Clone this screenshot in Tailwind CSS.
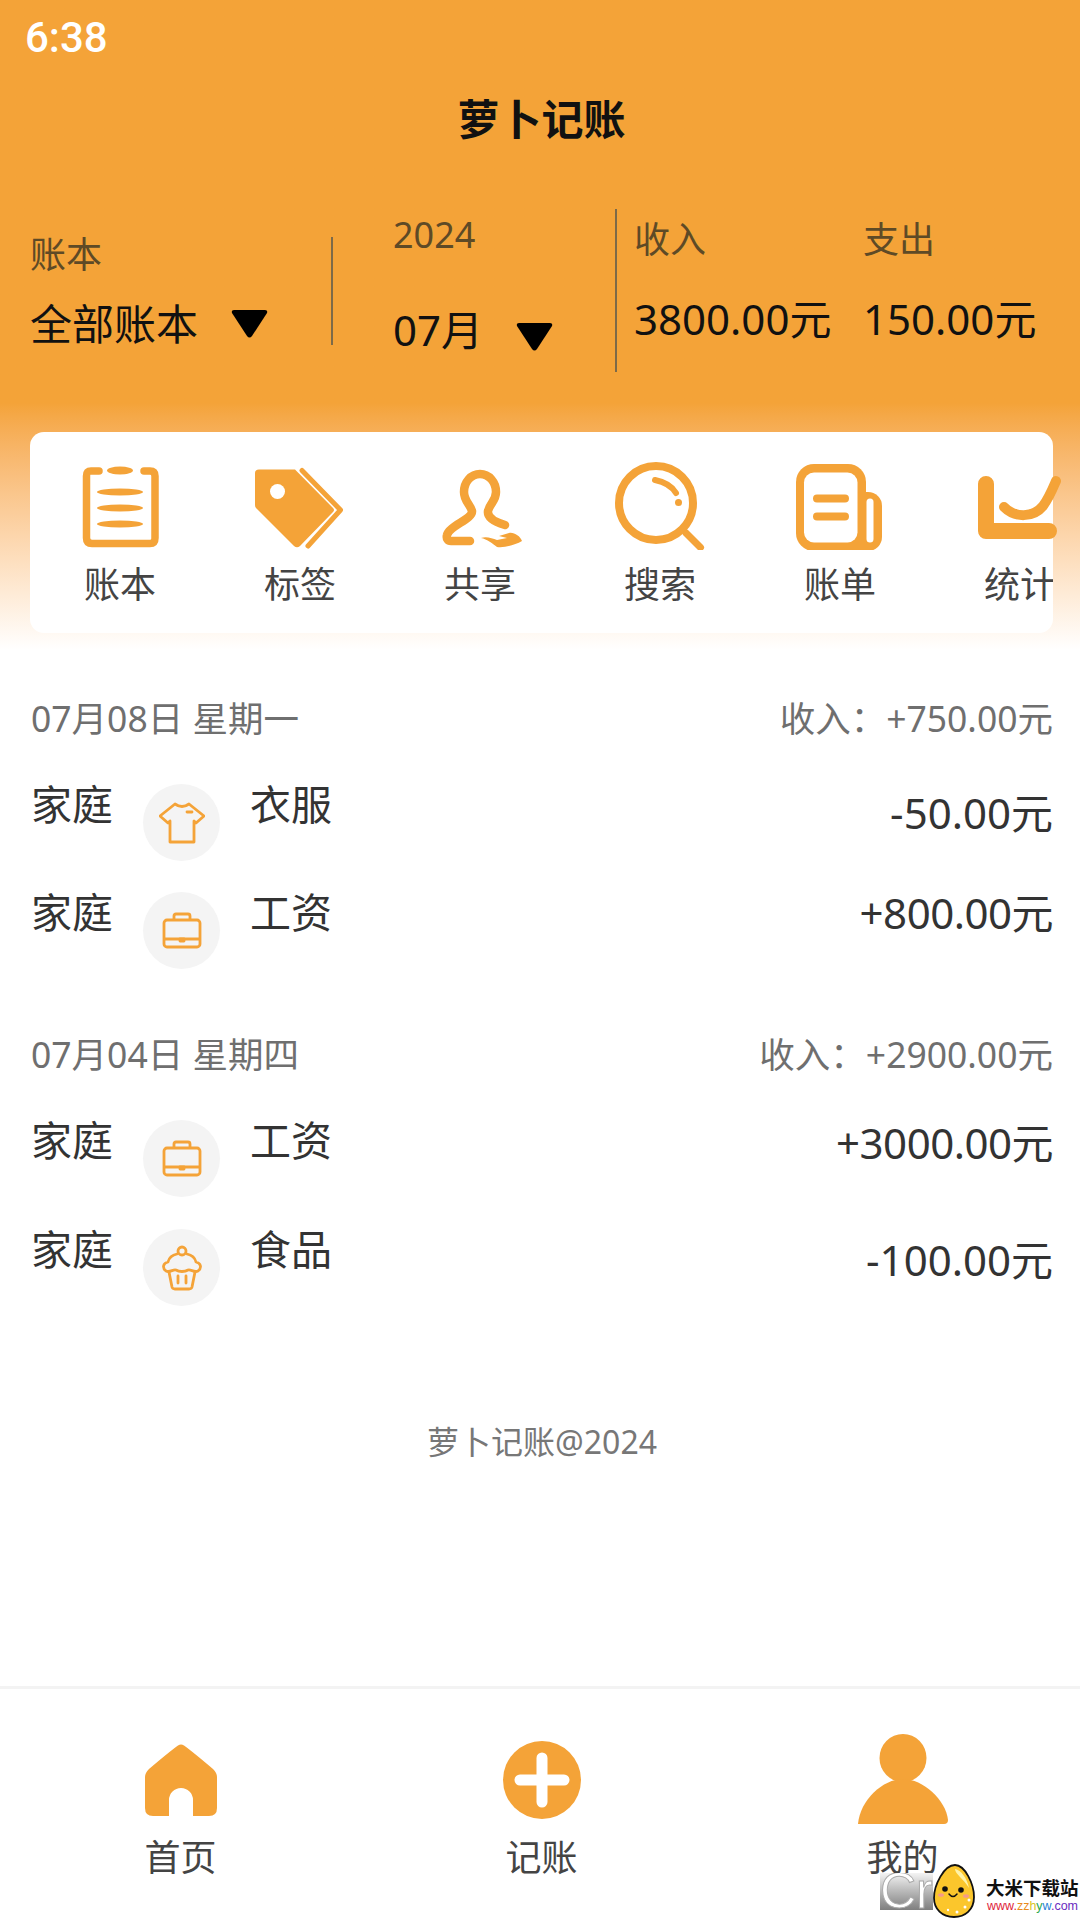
<!DOCTYPE html>
<html lang="zh-CN">
<head>
    <meta charset="UTF-8">
    <meta name="viewport" content="width=device-width, initial-scale=1.0">
    <title>萝卜记账</title>
    <script src="https://cdn.jsdelivr.net/npm/@tailwindcss/browser@4"></script>
</head>
<body class="bg-white">
<div class="relative w-[1080px] h-[1920px] overflow-hidden flex flex-col bg-white font-['Noto_Sans','Noto_Sans_CJK_SC',sans-serif]">

    <!-- orange header, fades out behind the shortcut card -->
    <header class="h-[650px] shrink-0 bg-linear-to-b from-[#f4a338] from-[62%] to-white">
        <div class="h-[75px] pl-[25px] flex items-center text-[42px] font-medium text-white font-['Roboto',sans-serif]">6:38</div>
        <h1 class="h-[87px] pl-[3px] flex items-center justify-center text-[42px] font-bold text-[#111]">萝卜记账</h1>

        <div class="mt-[47px] h-[163px] flex">
            <div class="w-[331px] pl-[30px] pt-[24px]">
                <div class="text-[36px] leading-[44px] text-[#5e4a26]">账本</div>
                <div class="mt-[22px] flex items-center text-[42px] leading-[50px] text-[#111]">
                    全部账本
                    <svg class="ml-[33px]" width="37" height="28" viewBox="0 0 37 28"><path d="M3 0H34Q37 0 36 3L21 26Q18.500 29 16 26L1 3Q0 0 3 0Z" fill="#000"/></svg>
                </div>
            </div>
            <div class="mt-[28px] h-[108px] w-[2px] bg-[#7d6a48]"></div>
            <div class="w-[282px] pl-[60px] pt-[4px]">
                <div class="text-[36px] leading-[44px] text-[#5e4a26]">2024</div>
                <div class="mt-[48px] flex items-center text-[42px] leading-[50px] text-[#111]">
                    07月
                    <svg class="ml-[33px] mt-[13px]" width="37" height="28" viewBox="0 0 37 28"><path d="M3 0H34Q37 0 36 3L21 26Q18.500 29 16 26L1 3Q0 0 3 0Z" fill="#000"/></svg>
                </div>
            </div>
            <div class="h-[163px] w-[2px] bg-[#7d6a48]"></div>
            <div class="pl-[17px] pt-[9px] grid grid-cols-[229px_200px]">
                <div class="text-[36px] leading-[44px] text-[#5e4a26]">收入</div>
                <div class="text-[36px] leading-[44px] text-[#5e4a26]">支出</div>
                <div class="mt-[4px] text-[42px] leading-[50px] text-[#111]">3800.00元</div>
                <div class="mt-[4px] text-[42px] leading-[50px] text-[#111]">150.00元</div>
            </div>
        </div>

        <!-- shortcuts -->
        <nav class="mt-[60px] ml-[30px] w-[1023px] h-[201px] rounded-[14px] bg-white flex pt-[28px]">
            <div class="w-[180px] shrink-0 flex flex-col items-center">
                <svg width="90" height="90" viewBox="0 0 90 90" fill="none">
                    <path d="M24 11H16Q11.500 11 11.500 16V78Q11.500 83.500 17 83.500H75Q80 83.500 80 78V16Q80 11 75 11H69" stroke="#f4a338" stroke-width="7.500" stroke-linecap="round"/>
                    <ellipse cx="45" cy="10.500" rx="13" ry="4" fill="#f4a338"/>
                    <ellipse cx="45" cy="32" rx="23" ry="3.500" fill="#f4a338"/>
                    <ellipse cx="45" cy="48" rx="23" ry="3.500" fill="#f4a338"/>
                    <ellipse cx="45" cy="64" rx="23" ry="3.500" fill="#f4a338"/>
                </svg>
                <span class="mt-[13px] text-[36px] leading-[44px] text-[#444]">账本</span>
            </div>
            <div class="w-[180px] shrink-0 flex flex-col items-center">
                <svg width="90" height="90" viewBox="0 0 90 90" fill="none">
                    <path d="M4 9.500H40L78 48Q80 50 78 52L45 86Q42 88.500 39 86L1 48Q0 47 0 45V13Q0 9.500 4 9.500Z" fill="#f4a338"/>
                    <circle cx="22.500" cy="31.500" r="7.500" fill="#fff"/>
                    <path d="M47 10.500L85.500 50L53 86" stroke="#f4a338" stroke-width="5" stroke-linecap="round" stroke-linejoin="round"/>
                </svg>
                <span class="mt-[13px] text-[36px] leading-[44px] text-[#444]">标签</span>
            </div>
            <div class="w-[180px] shrink-0 flex flex-col items-center">
                <svg width="90" height="90" viewBox="0 0 90 90" fill="none">
                    <path d="M70 65C60 62 52 58 53 51C55 43 61 41 61 32C61 22 54 14 45 14C36 14 29 22 29 32C29 41 35 44 37 51C38 59 14 66 12 75C11 79 13 81 16 81H35" stroke="#f4a338" stroke-width="8.500" stroke-linecap="round"/>
                    <path d="M46 78C52 79 58 84 62 87C70 88 80 85 87 81C85 76 79 72 74 73L64 76L72 78L62 80C57 78 51 76 46 78Z" fill="#f4a338"/>
                </svg>
                <span class="mt-[13px] text-[36px] leading-[44px] text-[#444]">共享</span>
            </div>
            <div class="w-[180px] shrink-0 flex flex-col items-center">
                <svg width="90" height="90" viewBox="0 0 90 90" fill="none" stroke="#f4a338" stroke-linecap="round">
                    <circle cx="41" cy="43" r="37" stroke-width="8"/>
                    <path d="M71 73L85.500 87.500" stroke-width="7"/>
                    <path d="M40 20Q55 23 61 33" stroke-width="6"/>
                    <circle cx="63.500" cy="42.500" r="3.500" fill="#f4a338" stroke="none"/>
                </svg>
                <span class="mt-[13px] text-[36px] leading-[44px] text-[#444]">搜索</span>
            </div>
            <div class="w-[180px] shrink-0 flex flex-col items-center">
                <svg width="90" height="90" viewBox="0 0 90 90" fill="none">
                    <rect x="1" y="4" width="70" height="87" rx="18" fill="#f4a338"/>
                    <rect x="50" y="32" width="37" height="59" rx="14" fill="#f4a338"/>
                    <rect x="9" y="12.500" width="53.500" height="70" rx="10" fill="#fff"/>
                    <rect x="71.500" y="38.500" width="7" height="44" rx="3.500" fill="#fff"/>
                    <path d="M22 38.500H50M22 56.500H50" stroke="#f4a338" stroke-width="8" stroke-linecap="round"/>
                </svg>
                <span class="mt-[13px] text-[36px] leading-[44px] text-[#444]">账单</span>
            </div>
            <div class="w-[123px] shrink-0 pl-[45px] flex flex-col items-start">
                <svg class="overflow-visible shrink-0" width="90" height="90" viewBox="0 0 90 90" fill="none" stroke="#f4a338" stroke-linecap="round" stroke-linejoin="round">
                    <path d="M11 24V71H74" stroke-width="16"/>
                    <path d="M29 47C40 58 58 58 68 46C74 38 78 28 81 21" stroke-width="10"/>
                </svg>
                <span class="mt-[13px] ml-[9px] w-[69px] overflow-hidden whitespace-nowrap text-[36px] leading-[44px] text-[#444]">统计</span>
            </div>
        </nav>
    </header>

    <!-- records -->
    <main class="flex-1 pl-[31px] pr-[27px] pt-[46px]">
        <div class="flex justify-between text-[35.500px] leading-[44px] text-[#6f6f6f]">
            <span>07月08日 星期一</span>
            <span>收入：+750.00元</span>
        </div>
        <div class="mt-[39px] h-[88px] flex items-start text-[#333]">
            <span class="w-[112px] text-[41px] leading-[50px]">家庭</span>
            <span class="mt-[5px] size-[77px] rounded-full bg-[#f4f4f4] flex items-center justify-center">
                <svg width="46" height="42" viewBox="0 0 46 42" fill="none" stroke="#f4a338" stroke-width="2.800" stroke-linejoin="round" stroke-linecap="round">
                    <path d="M16 2Q23 7 30 2L45 14L37 21L35 19V40H11V19L9 21L1 14Z"/>
                    <path d="M28 10H33"/>
                </svg>
            </span>
            <span class="ml-[30px] text-[41px] leading-[50px]">衣服</span>
            <span class="ml-auto mt-[9px] text-[42px] leading-[50px]">-50.00元</span>
        </div>
        <div class="mt-[20px] h-[88px] flex items-start text-[#333]">
            <span class="w-[112px] text-[41px] leading-[50px]">家庭</span>
            <span class="mt-[5px] size-[77px] rounded-full bg-[#f4f4f4] flex items-center justify-center">
                <svg width="40" height="37" viewBox="0 0 40 37" fill="none" stroke="#f4a338" stroke-width="2.800" stroke-linejoin="round">
                    <rect x="2" y="8" width="36" height="27" rx="3"/>
                    <path d="M12 8V4Q12 2 14 2H26Q28 2 28 4V8"/>
                    <path d="M2 27H38"/>
                    <path d="M18 27H22V29H18Z" fill="#f4a338"/>
                </svg>
            </span>
            <span class="ml-[30px] text-[41px] leading-[50px]">工资</span>
            <span class="ml-auto mt-[1px] text-[42px] leading-[50px] tracking-[-0.5px]">+800.00元</span>
        </div>

        <div class="mt-[57px] flex justify-between text-[35.500px] leading-[44px] text-[#6f6f6f]">
            <span>07月04日 星期四</span>
            <span>收入：+2900.00元</span>
        </div>
        <div class="mt-[39px] h-[88px] flex items-start text-[#333]">
            <span class="w-[112px] text-[41px] leading-[50px]">家庭</span>
            <span class="mt-[5px] size-[77px] rounded-full bg-[#f4f4f4] flex items-center justify-center">
                <svg width="40" height="37" viewBox="0 0 40 37" fill="none" stroke="#f4a338" stroke-width="2.800" stroke-linejoin="round">
                    <rect x="2" y="8" width="36" height="27" rx="3"/>
                    <path d="M12 8V4Q12 2 14 2H26Q28 2 28 4V8"/>
                    <path d="M2 27H38"/>
                    <path d="M18 27H22V29H18Z" fill="#f4a338"/>
                </svg>
            </span>
            <span class="ml-[30px] text-[41px] leading-[50px]">工资</span>
            <span class="ml-auto mt-[3px] text-[42px] leading-[50px] tracking-[-0.5px]">+3000.00元</span>
        </div>
        <div class="mt-[21px] h-[88px] flex items-start text-[#333]">
            <span class="w-[112px] text-[41px] leading-[50px]">家庭</span>
            <span class="mt-[5px] size-[77px] rounded-full bg-[#f4f4f4] flex items-center justify-center">
                <svg width="40" height="46" viewBox="0 0 40 46" fill="none" stroke="#f4a338" stroke-width="2.800" stroke-linejoin="round" stroke-linecap="round">
                    <circle cx="20" cy="6" r="4"/>
                    <path d="M15 9C10 10 7 13 6 17C1 18 0 23 4 26C8 28 11 24 14 25C17 27 23 27 26 25C29 24 32 28 36 26C40 23 39 18 34 17C33 13 30 10 25 9"/>
                    <path d="M7 27L10 42Q10.500 44 13 44H27Q29.500 44 30 42L33 27"/>
                    <path d="M16 31V38M24 31V38"/>
                </svg>
            </span>
            <span class="ml-[30px] text-[41px] leading-[50px]">食品</span>
            <span class="ml-auto mt-[11px] text-[42px] leading-[50px]">-100.00元</span>
        </div>

        <p class="mt-[108px] text-center text-[32px] leading-[44px] text-[#777]">萝卜记账@2024</p>
    </main>

    <!-- bottom tabs -->
    <footer class="h-[234px] shrink-0 border-t-[3px] border-[#f3f3f3] bg-white grid grid-cols-[361px_361px_361px] pt-[45px]">
        <div class="flex flex-col items-center">
            <div class="h-[92px] flex items-center">
                <svg width="72" height="72" viewBox="0 0 72 72"><path d="M33 1.500Q36 -0.500 39 1.500Q48 8 68 25Q72 29 72 33V64Q72 72 64 72H48V56A12 12 0 0 0 24 56V72H8Q0 72 0 64V33Q0 29 4 25Q24 8 33 1.500Z" fill="#f4a338"/></svg>
            </div>
            <span class="mt-[10px] text-[36px] leading-[44px] text-[#444]">首页</span>
        </div>
        <div class="flex flex-col items-center">
            <div class="h-[92px] flex items-center">
                <svg width="78" height="78" viewBox="0 0 78 78"><circle cx="39" cy="39" r="39" fill="#f4a338"/><path d="M39 17V61M17 39H61" stroke="#fff" stroke-width="11" stroke-linecap="round"/></svg>
            </div>
            <span class="mt-[10px] text-[36px] leading-[44px] text-[#444]">记账</span>
        </div>
        <div class="flex flex-col items-center">
            <div class="h-[92px] flex items-center">
                <svg width="92" height="92" viewBox="0 0 92 92"><ellipse cx="46" cy="24" rx="23.500" ry="24" fill="#f4a338"/><path d="M1 90C3 66 26 45 46 45C66 45 89 66 91 86Q91 90 87 90Z" fill="#f4a338"/></svg>
            </div>
            <span class="mt-[10px] text-[36px] leading-[44px] text-[#444]">我的</span>
        </div>
    </footer>

    <!-- download-site watermark over the corner -->
    <div class="absolute left-[880px] top-[1873px] w-[53px] h-[37px] overflow-hidden bg-linear-to-b from-[#f4f4f4] to-[#7f7f7f] text-[50px] leading-[37px] text-white [-webkit-text-stroke:1px_#aaa] font-['Liberation_Sans',sans-serif]">Cr</div>
    <svg class="absolute left-[933px] top-[1864px]" width="42" height="54" viewBox="0 0 42 54">
        <path d="M22 1C32 1 41 20 41 33C41 46 32 53 21 53C9 53 1 45 1 34C1 21 11 1 22 1Z" fill="#fbc62c" stroke="#111" stroke-width="1.800"/>
        <path d="M22 5C28 6 34 14 36 24C30 14 22 10 22 5Z" fill="#fff3a8"/>
        <circle cx="12" cy="25" r="2.800" fill="#111"/>
        <circle cx="28" cy="26" r="2.800" fill="#111"/>
        <path d="M16 30Q20 35 24 30" fill="none" stroke="#111" stroke-width="1.500" stroke-linecap="round"/>
        <ellipse cx="8" cy="31" rx="3" ry="1.800" fill="#f59a8a"/>
        <ellipse cx="33" cy="32" rx="3" ry="1.800" fill="#f59a8a"/>
        <circle cx="36" cy="36" r="1.500" fill="#fff"/>
        <circle cx="32" cy="43" r="1.500" fill="#fff"/>
        <circle cx="24" cy="48" r="1.500" fill="#fff"/>
        <circle cx="15" cy="46" r="1.200" fill="#fff"/>
    </svg>
    <div class="absolute left-[986px] top-[1875px] text-[18.500px] leading-[24px] font-bold text-[#111] whitespace-nowrap font-['Noto_Sans_CJK_SC',sans-serif]">大米下载站</div>
    <div class="absolute left-[987px] top-[1899px] text-[12.500px] leading-[15px] whitespace-nowrap font-['Liberation_Sans',sans-serif]"><span class="text-[#e0243a]">www.</span><span class="text-[#e98b1c]">zz</span><span class="text-[#d9c51d]">h</span><span class="text-[#2aa84a]">y</span><span class="text-[#1f7fd6]">w</span><span class="text-[#6a2cc0]">.com</span></div>
</div>
</body>
</html>
